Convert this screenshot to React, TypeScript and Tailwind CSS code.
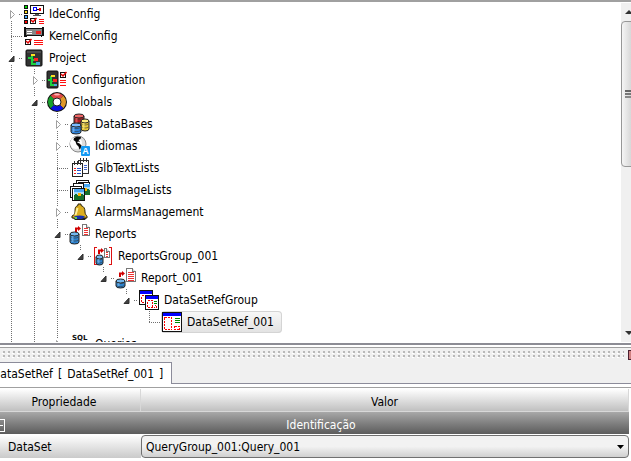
import { useState } from "react";
import type { ReactNode } from "react";

function Icon({ children }: { children?: ReactNode }) {
    return (
        <svg width="22" height="22" viewBox="0 0 22 22" className="shrink-0" shapeRendering="crispEdges" aria-hidden="true">
            {children}
        </svg>
    )
}

function Check({ x, y }: { x: number; y: number }) {
    return (
        <g transform={`translate(${x} ${y})`}>
            <path d="M.5 .5h5v5h-5z" fill="#fff" stroke="#111" />
            <path d="M1 2l2 2L6.500 0" fill="none" stroke="#e00000" strokeWidth="1.5" shapeRendering="auto" />
        </g>
    )
}

function Cylinder({ x, y, w, h, light, fill }: { x: number; y: number; w: number; h: number; light: string; fill: string }) {
    const r = w / 2
    const body = `M0 2v${h - 4}a${r} 2 0 0 0 ${w} 0V2`
    return (
        <g transform={`translate(${x} ${y})`} shapeRendering="auto">
            <path d={body} fill={fill} stroke="#222" />
            <ellipse cx={r} cy="2" rx={r} ry="2" fill={light} stroke="#222" />
            <path d={`M.5 ${h / 2 - 1}a${r} 2 0 0 0 ${w - 1} 0M.5 ${h / 2 + 2}a${r} 2 0 0 0 ${w - 1} 0`} fill="none" stroke="#333" strokeWidth=".6" />
            <path d={`M2.500 4v${h - 6}`} stroke={light} strokeWidth="2" opacity=".7" />
        </g>
    )
}

function Sheet({ x, y, w, h }: { x: number; y: number; w: number; h: number }) {
    const lines = []
    for (let i = 4; i < h - 1; i += 2) lines.push(`M2 ${i + 0.5}h${w - 4}`)
    return (
        <g transform={`translate(${x} ${y})`}>
            <path d={`M.5 .5h${w - 4}l3 3v${h - 4}h${-(w - 1)}z`} fill="#fff" stroke="#777" />
            <path d={`M${w - 3.5} .5v3h3`} fill="#ddd" stroke="#777" />
            <path d={lines.join("")} stroke="#e33" />
        </g>
    )
}

function RedArrow({ x, y }: { x: number; y: number }) {
    return <path transform={`translate(${x} ${y})`} d="M0 6V1.500h3V0l3 2.500L3 5V3.500H2V6z" fill="#d00000" shapeRendering="auto" />
}

function SmallWindow({ x, y }: { x: number; y: number }) {
    return (
        <g transform={`translate(${x} ${y})`}>
            <path d="M.5 .5h13v14H.5z" fill="#fff" stroke="#111" />
            <path d="M1 1h12v3H1z" fill="#00f" />
            <path d="M2.500 5.500h5v7h-5z" fill="none" stroke="#e00" strokeDasharray="2 1" />
            <path d="M9 6.500h3M9 8.500h3" stroke="#080" />
            <path d="M9.500 10.500h2v2h-2z" fill="none" stroke="#e00" strokeDasharray="1 1" />
        </g>
    )
}

function Photo({ x, y }: { x: number; y: number }) {
    return (
        <g transform={`translate(${x} ${y})`}>
            <path d="M0 0h10v11H0z" fill="#4aa8f0" />
            <path d="M0 3h10v3H0z" fill="#a5dcfa" />
            <path d="M0 6l2-1 3 2 3-2 2 1v5H0z" fill="#17702b" />
            <path d="M4 4h3v3H4z" fill="#ffb400" />
        </g>
    )
}

const icons: Record<string, ReactNode> = {
    ide: (
        <>
            <path d="M1 2h4v4H1zM1 7h4v4H1zM1 12h4v4H1zM1 17h4v4H1z" fill="#111" />
            <path d="M2 3h2v2H2z" fill="#0d0" />
            <path d="M2 8h2v2H2z" fill="#fd2" />
            <path d="M2 13h2v2H2z" fill="#4af" />
            <path d="M2 18h2v2H2z" fill="#f00" />
            <path d="M7.500 2.500h13v8h-13z" fill="#fff" stroke="#111" />
            <path d="M10.500 4.500h3v3h-3z" fill="#fff" stroke="#00f" />
            <path d="M14 6h2v1h-2z" fill="#111" />
            <path d="M16 5h2v3h-2z" fill="#e00" />
            <path d="M12 11h4v1h2v1h-8v-1h2z" fill="#555" />
            <Check x={7} y={15} />
            <path d="M16 16.500h5M16 18.500h5M16 20.500h5" stroke="#ff1010" />
        </>
    ),
    kernel: (
        <>
            <path d="M1 2h2v1h16V2h2v9h-2v1h-1v-1H4v1H1z" fill="#111" />
            <path d="M3 4h16v6H3z" fill="#858585" />
            <path d="M4 6.500h5M4 8.500h5" stroke="#fff" />
            <path d="M13 6h5v3h-5z" fill="#f02020" />
            <Check x={2} y={14} />
            <path d="M11 15.500h9M11 17.500h9M11 19.500h9" stroke="#ff1010" />
        </>
    ),
    project: (
        <>
            <rect x="3" y="3" width="16" height="16" rx="1" fill="#333" stroke="#111" shapeRendering="auto" />
            <path d="M4 4h14v2H4z" fill="#4b4b4b" />
            <path d="M5 10h3V8h2v4h2v2h-2v2h3v2H8v-6H5z" fill="#1cd23c" />
            <path d="M8 7h4v2H8z" fill="#fd2" />
            <path d="M11 11h4v3h-4z" fill="#f22" />
            <path d="M13 15h4v3h-4z" fill="#4ad" />
        </>
    ),
    configuration: (
        <>
            <rect x="1" y="2" width="11" height="17" rx="1" fill="#333" stroke="#111" shapeRendering="auto" />
            <path d="M2 10h2V7h2v5h2v1H6v2h3v2H4v-5H2z" fill="#1cd23c" />
            <path d="M5 6h4v2H5z" fill="#fd2" />
            <path d="M7 10h4v3H7z" fill="#f22" />
            <path d="M8 15h3v2H8z" fill="#4ad" />
            <Check x={14} y={3} />
            <path d="M14 11.500h6M14 13.500h6M14 16.500h6" stroke="#ff1010" />
        </>
    ),
    globals: (
        <g shapeRendering="auto">
            <circle cx="11" cy="11" r="10" fill="#111" />
            <g fill="none" strokeWidth="5">
                <path d="M6.400 6.400a6.500 6.500 0 0 1 9.200 0" stroke="#e04848" />
                <path d="M15.600 6.400a6.500 6.500 0 0 1 0 9.200" stroke="#e0982a" />
                <path d="M15.600 15.600a6.500 6.500 0 0 1-9.200 0" stroke="#0a10e0" />
                <path d="M6.400 15.600a6.500 6.500 0 0 1 0-9.200" stroke="#17a02c" />
            </g>
            <ellipse cx="11" cy="3.500" rx="3" ry="1" fill="#ffb5b5" />
            <circle cx="11" cy="11" r="4" fill="#fff" stroke="#222" />
        </g>
    ),
    databases: (
        <>
            <Cylinder x={5} y={1} w={10} h={11} light="#e66" fill="#b81c24" />
            <Cylinder x={12} y={6} w={8} h={12} light="#ffee80" fill="#e8c83a" />
            <Cylinder x={2} y={10} w={10} h={11} light="#7bbcff" fill="#2f86e0" />
        </>
    ),
    idiomas: (
        <g shapeRendering="auto">
            <circle cx="9" cy="9" r="8" fill="#dedede" stroke="#888" />
            <circle cx="7" cy="8" r="6" fill="#fff" />
            <path d="M5 3l3-1.500 4 .5-.5 2-2 1 1.500 2-2-.5-1 1 2.500 1 2 2-1 3-1 1-1-3-2-2-1-3-2-1.500z" fill="#080808" />
            <rect x="12" y="11" width="9" height="10" rx="1" fill="#149af4" />
            <text x="16.500" y="19" textAnchor="middle" fontSize="9" fontWeight="bold" fontFamily="Liberation Sans, sans-serif" fill="#fff">A</text>
        </g>
    ),
    texts: (
        <>
            <path d="M9.500 3.500h10v13h-10z" fill="#fff" stroke="#333" />
            <path d="M11.500 1v4M14.500 1v4M17.500 1v4" stroke="#333" />
            <path d="M15 8.500h3M15 10.500h3M15 12.500h3" stroke="#46c" />
            <path d="M3.500 6.500h10v13h-10z" fill="#fff" stroke="#222" />
            <path d="M5.500 4v4M8.500 4v4M11.500 4v4" stroke="#333" />
            <path d="M8 11.500h4M8 13.500h4M8 16.500h4" stroke="#25c" />
            <path d="M5 11.500h2M5 13.500h2M5 16.500h2" stroke="#e22" />
        </>
    ),
    images: (
        <>
            <path d="M7.500 1.500h12v11h-12z" fill="#fff" stroke="#111" />
            <path d="M9.500 3.500h11v12h-11z" fill="#fff" stroke="#111" />
            <Photo x={11} y={5} />
            <path d="M4.500 4.500h10v11h-10z" fill="#fff" stroke="#111" />
            <path d="M1.500 7.500h11v11h-11z" fill="#fff" stroke="#111" />
            <path d="M3.500 9.500h12v12h-12z" fill="#fff" stroke="#111" />
            <Photo x={5} y={10} />
        </>
    ),
    alarms: (
        <g shapeRendering="auto">
            <path d="M3 16q8-3 15 0l-2 3H6z" fill="#222" />
            <path d="M9 3h3v1.500c3 1 4 3 4 6.500 0 2 1 3 2 4v2H3v-2c2-1 3-2 3-4 0-3.500 0-5.500 3-6.500z" fill="#dcae20" stroke="#2b220b" />
            <path d="M8.500 7q-1 4-2 7" stroke="#fff29a" strokeWidth="2" fill="none" />
            <path d="M5 15.500q6-2 11 0L13 18H8z" fill="#1530b0" />
            <path d="M5 16h3v2H6z" fill="#6c5" />
        </g>
    ),
    reports: (
        <>
            <RedArrow x={6} y={3} />
            <Sheet x={13} y={1} w={8} h={12} />
            <Cylinder x={1} y={9} w={9} h={12} light="#74b8ef" fill="#2d83cf" />
        </>
    ),
    reportsGroup: (
        <>
            <path d="M5 2.500H2.500v17H5M17 2.500h2.500v17H17" fill="none" stroke="#d11" />
            <RedArrow x={6} y={3} />
            <Sheet x={12} y={3} w={6} h={10} />
            <Cylinder x={4} y={10} w={7} h={10} light="#74b8ef" fill="#2d83cf" />
        </>
    ),
    report: (
        <>
            <RedArrow x={4} y={4} />
            <Sheet x={11} y={1} w={10} h={14} />
            <Cylinder x={1} y={12} w={9} h={9} light="#74b8ef" fill="#2d83cf" />
        </>
    ),
    refGroup: (
        <>
            <SmallWindow x={1} y={1} />
            <SmallWindow x={7} y={6} />
        </>
    ),
    ref: (
        <>
            <path d="M1.500 1.500h19v19h-19z" fill="#fff" stroke="#111" />
            <path d="M2 2h18v3H2z" fill="#00f" />
            <path d="M3.500 6.500h7v12h-7z" fill="none" stroke="#f00" strokeDasharray="2 1" />
            <path d="M14 7.500h5M14 9.500h5M14 11.500h5" stroke="#080" />
            <path d="M13.500 15.500h5v3h-5z" fill="none" stroke="#f00" strokeDasharray="2 1" />
        </>
    ),
    sql: (
        <text x="3" y="7" fontSize="7" fontWeight="bold" fontFamily="DejaVu Sans, sans-serif" fill="#111">SQL</text>
    ),
}

type Row = {
    label: string
    icon: string
    // one entry per ancestor level, true where its guide runs on
    guides: boolean[]
    state?: "open" | "closed"
    first?: boolean
    last?: boolean
}

const rows: Row[] = [
    { label: "IdeConfig", icon: "ide", guides: [], state: "closed", first: true },
    { label: "KernelConfig", icon: "kernel", guides: [] },
    { label: "Project", icon: "project", guides: [], state: "open" },
    { label: "Configuration", icon: "configuration", guides: [true], state: "closed" },
    { label: "Globals", icon: "globals", guides: [true], state: "open" },
    { label: "DataBases", icon: "databases", guides: [true, true], state: "closed" },
    { label: "Idiomas", icon: "idiomas", guides: [true, true], state: "closed" },
    { label: "GlbTextLists", icon: "texts", guides: [true, true] },
    { label: "GlbImageLists", icon: "images", guides: [true, true] },
    { label: "AlarmsManagement", icon: "alarms", guides: [true, true], state: "closed" },
    { label: "Reports", icon: "reports", guides: [true, true], state: "open" },
    { label: "ReportsGroup_001", icon: "reportsGroup", guides: [true, true, true], state: "open", last: true },
    { label: "Report_001", icon: "report", guides: [true, true, true, false], state: "open", last: true },
    { label: "DataSetRefGroup", icon: "refGroup", guides: [true, true, true, false, false], state: "open", last: true },
    { label: "DataSetRef_001", icon: "ref", guides: [true, true, true, false, false, false], last: true },
    { label: "Queries", icon: "sql", guides: [true, true], state: "closed" },
]

function Branch({ row }: { row: Row }) {
    return (
        <svg width="23" height="22" viewBox="0 0 23 22" className="block" shapeRendering="crispEdges" aria-hidden="true">
            <g stroke="#707070" strokeDasharray="1 1" fill="none">
                {!row.first && <path d={row.state ? "M11.5 0v5" : "M11.5 0v11"} />}
                {!row.last && <path d={row.state ? "M11.5 18v4" : "M11.5 12v10"} />}
                <path d={row.state ? "M19 11.5h4" : "M11 11.5h12"} />
            </g>
            {row.state === "closed" && <path d="M10.500 7.500l4 4-4 4z" fill="#fff" stroke="#a0a0a0" shapeRendering="auto" />}
            {row.state === "open" && <path d="M14 9v5.500H9z" fill="#404040" stroke="#303030" shapeRendering="auto" />}
        </svg>
    )
}

function TreeRow({ row, selected, onSelect }: { row: Row; selected: boolean; onSelect: () => void }) {
    return (
        <li role="treeitem" aria-level={row.guides.length + 1} aria-selected={selected} className="flex h-[22px] shrink-0">
            {row.guides.map((on, i) => (
                <svg key={i} width="23" height="22" className="shrink-0" shapeRendering="crispEdges" aria-hidden="true">
                    {on && <path d="M11.5 0v22" stroke="#707070" strokeDasharray="1 1" />}
                </svg>
            ))}
            {row.state ? (
                <button type="button" aria-label={`Toggle ${row.label}`}><Branch row={row} /></button>
            ) : (
                <Branch row={row} />
            )}
            <button
                type="button"
                onClick={onSelect}
                className={selected
                    ? "flex items-center gap-1 rounded-sm bg-linear-to-b from-[#f8f8f8] to-[#e2e2e2] pr-2 ring-1 ring-[#d4d4d4] ring-inset"
                    : "flex items-center gap-1 pr-2"}
            >
                <Icon>{icons[row.icon]}</Icon>
                <span className="whitespace-nowrap">{row.label}</span>
            </button>
        </li>
    )
}

function ScrollBar() {
    return (
        <div className="flex w-[10px] shrink-0 flex-col overflow-hidden bg-[#f0f0f0]">
            <button type="button" aria-label="Scroll up" className="flex h-[18px] w-4 items-center justify-center">
                <svg width="8" height="4"><path d="M0 4l4-4 4 4z" fill="#333" /></svg>
            </button>
            <div className="flex h-[146px] w-4 flex-col items-center justify-center gap-px rounded-sm border border-[#979797] bg-linear-to-r from-[#f5f5f5] to-[#c8c8c8]">
                <span className="h-[2px] w-2 bg-[#666]" />
                <span className="h-[2px] w-2 bg-[#777]" />
                <span className="h-[2px] w-2 bg-[#888]" />
            </div>
            <div className="flex-1" />
            <button type="button" aria-label="Scroll down" className="flex h-[18px] w-4 items-center justify-center">
                <svg width="8" height="4"><path d="M0 0h8L4 4z" fill="#333" /></svg>
            </button>
        </div>
    )
}

function DockHandle() {
    return (
        <div className="flex h-[14px] items-center overflow-hidden">
            <svg height="8" className="min-w-0 flex-1" shapeRendering="crispEdges" aria-hidden="true">
                <defs>
                    <pattern id="grip" width="5" height="4" patternUnits="userSpaceOnUse">
                        <path d="M3 0h2v2H3z" fill="#b9b9b9" />
                        <path d="M2 2h2v1H2z" fill="#fff" />
                    </pattern>
                </defs>
                <rect width="100%" height="8" fill="url(#grip)" />
            </svg>
            <button type="button" aria-label="Close" className="ml-1 h-[10px] w-[3px] border-y border-l border-[#4a2030] bg-[#d08080]" />
        </div>
    )
}

export default function App() {
    const [selected, setSelected] = useState("DataSetRef_001")

    return (
        <div className="min-h-screen overflow-hidden bg-white font-['DejaVu_Sans_Condensed','DejaVu_Sans',sans-serif] text-xs text-black">
            <div className="flex h-[343px] overflow-hidden border-t-2 border-[#a0a0a0] pt-px pb-px">
                <ul role="tree" className="flex min-w-0 flex-1 flex-col overflow-hidden">
                    {rows.map((row) => (
                        <TreeRow key={row.label} row={row} selected={row.label === selected} onSelect={() => setSelected(row.label)} />
                    ))}
                </ul>
                <ScrollBar />
            </div>

            <div className="border-t-2 border-[#8c8c94] bg-[#f0f0f0]">
                <div className="h-[2px] bg-white" />
                <div className="border-t border-[#a0a0a0]">
                    <DockHandle />
                </div>
                <div role="tablist" className="flex h-[22px] border-b border-[#8c8c9a]">
                    <button
                        type="button"
                        role="tab"
                        aria-selected="true"
                        className="-mb-px -ml-2 border-t border-r border-[#8c8c9a] bg-white pr-2 whitespace-nowrap"
                    >
                        <span className="flex gap-[5px]">
                            <span>DataSetRef</span>
                            <span>[</span>
                            <span>DataSetRef_001</span>
                            <span>]</span>
                        </span>
                    </button>
                </div>
            </div>

            <div className="overflow-hidden bg-white pt-[3px]">
                <div className="border-t border-[#a0a0a0] pt-px">
                    <table className="-ml-3 w-[calc(100%+10px)] table-fixed border-separate border-spacing-0">
                        <colgroup>
                            <col className="w-[153px]" />
                            <col />
                        </colgroup>
                        <thead>
                            <tr className="h-[23px]">
                                <th className="border-r border-b border-[#d8d8d8] bg-linear-to-b from-white to-[#c0c0c0] p-0 pt-1 font-normal">Propriedade</th>
                                <th className="border-r border-b border-[#d8d8d8] bg-linear-to-b from-white to-[#c0c0c0] p-0 pt-1 font-normal">Valor</th>
                            </tr>
                        </thead>
                        <tbody>
                            <tr className="h-[23px]">
                                <th colSpan={2} className="border-b border-white bg-linear-to-b from-[#a8a8a8] to-[#5c5c5c] p-0 pt-1 font-normal text-white">
                                    <div className="flex items-center pl-1">
                                        <button type="button" aria-label="Collapse group" className="flex h-[13px] w-[13px] items-center justify-center border border-white">
                                            <span className="h-px w-[9px] bg-white" />
                                        </button>
                                        <span className="flex-1 pl-2">Identificação</span>
                                    </div>
                                </th>
                            </tr>
                            <tr className="h-[23px]">
                                <td className="bg-linear-to-b from-white to-[#cacaca] p-0 pl-5">
                                    <label htmlFor="dataset">DataSet</label>
                                </td>
                                <td className="p-0">
                                    <div className="grid items-center">
                                        <select
                                            id="dataset"
                                            className="col-start-1 row-start-1 h-[23px] w-full appearance-none rounded-sm border border-[#707070] bg-linear-to-b from-[#f2f2f2] from-50% to-[#d0d0d0] px-1"
                                        >
                                            <option>QueryGroup_001:Query_001</option>
                                        </select>
                                        <svg width="7" height="4" className="pointer-events-none col-start-1 row-start-1 mr-[5px] justify-self-end">
                                            <path d="M0 0h7L3.500 4z" fill="#000" />
                                        </svg>
                                    </div>
                                </td>
                            </tr>
                        </tbody>
                    </table>
                </div>
            </div>
        </div>
    )
}
